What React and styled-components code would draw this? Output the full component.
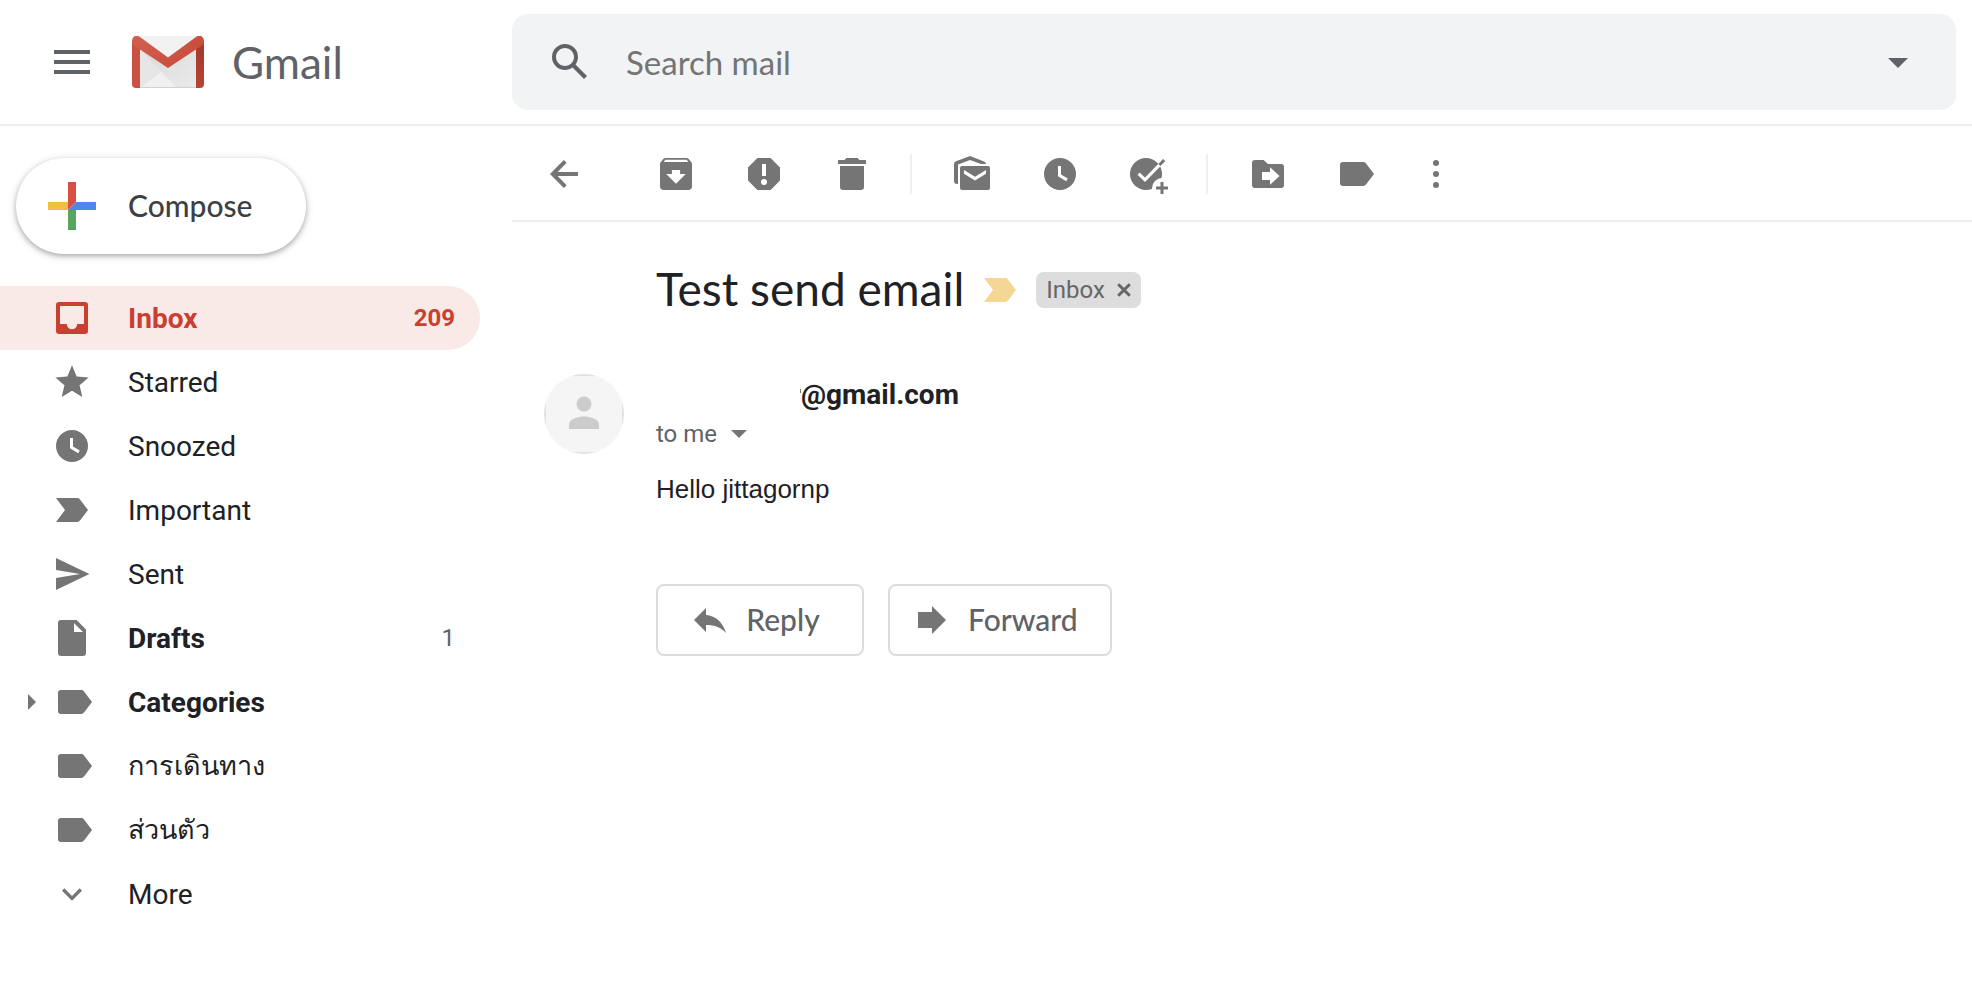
import React from "react";
import styled, { createGlobalStyle } from "styled-components";

const GlobalStyle = createGlobalStyle`
  *, *::before, *::after { box-sizing: border-box; }
  body { margin: 0; background: #fff; color: #202124; font-family: Roboto, "Liberation Sans", sans-serif; }
  button { margin: 0; padding: 0; border: 0; background: none; font: inherit; color: inherit; cursor: pointer; }
  svg { display: block; flex: none; }
`;

const brandFont = `Lato, "Open Sans", sans-serif`;

/* ---------- page frame ---------- */

const Header = styled.header`
  display: grid;
  grid-template-columns: 512px 1fr;
  align-items: center;
  height: 126px;
  padding-right: 16px;
  border-bottom: 2px solid #eee;
`;

const Brand = styled.div`
  display: flex;
  align-items: center;
  padding-left: 48px;
`;

const LogoLink = styled.a`
  display: flex;
  align-items: center;
  gap: 28px;
  margin-left: 36px;
  color: #5f6368;
  font: 400 44px/56px ${brandFont};
  text-decoration: none;
`;

const SearchBar = styled.form`
  display: flex;
  align-items: center;
  height: 96px;
  padding: 0 34px;
  border-radius: 16px;
  background: #f1f3f4;
  color: #5f6368;
`;

const SearchInput = styled.input`
  flex: 1;
  min-width: 0;
  height: 64px;
  padding: 0 32px;
  border: 0;
  outline: 0;
  background: transparent;
  color: #202124;
  font: 400 33px/40px ${brandFont};
  &::placeholder { color: #747474; opacity: 1; }
`;

const Body = styled.div`
  display: grid;
  grid-template-columns: 480px 1fr;
  column-gap: 32px;
`;

/* ---------- sidebar ---------- */

const ComposeButton = styled.button`
  display: flex;
  align-items: center;
  gap: 32px;
  height: 96px;
  margin: 32px 16px;
  padding: 0 54px 0 32px;
  border-radius: 48px;
  background: #fff;
  color: #3c4043;
  font: 500 30px/40px ${brandFont};
  box-shadow: 0 2px 4px rgba(60, 64, 67, 0.3), 0 2px 6px 2px rgba(60, 64, 67, 0.15);
`;

const ButtonLabel = styled.span`
  padding-bottom: 2px;
`;

const Folder = styled.a`
  display: grid;
  grid-template-columns: 24px 40px 1fr auto;
  align-items: center;
  height: 64px;
  padding: 0 25px 0 28px;
  border-radius: 0 32px 32px 0;
  background: ${(p) => (p.$active ? "#f9e9e7" : "transparent")};
  color: ${(p) => (p.$active ? "#c94031" : "#202124")};
  font-size: 28px;
  line-height: 40px;
  font-weight: ${(p) => (p.$bold ? 700 : 400)};
  text-decoration: none;
  svg { color: ${(p) => (p.$active ? "#c94031" : "#757575")}; }
`;

const FolderName = styled.span`
  padding: 2px 0 0 36px;
  &:lang(th) { padding-top: 0; font-size: 27px; }
`;

const FolderCount = styled.span`
  color: ${(p) => (p.$active ? "#c94031" : "#5f6368")};
  font-size: 24px;
  font-weight: ${(p) => (p.$active ? 700 : 400)};
`;

/* ---------- message view ---------- */

const Toolbar = styled.div`
  display: flex;
  align-items: center;
  gap: 48px;
  height: 96px;
  padding: 2px 0 0 32px;
  border-bottom: 2px solid #eee;
  color: #757575;
`;

const ToolGroup = styled.div`
  display: flex;
  align-items: center;
  gap: 48px;
  margin-left: ${(p) => p.$indent || 0}px;
`;

const Divider = styled.span`
  width: 2px;
  height: 40px;
  margin: 0 -8px 0 -10px;
  background: #eee;
`;

const SubjectRow = styled.div`
  display: flex;
  align-items: center;
  gap: 20px;
  padding: 40px 0 0 144px;
`;

const Subject = styled.h1`
  margin: 0;
  padding-bottom: 2px;
  font: 400 46px/54px ${brandFont};
`;

const Chip = styled.span`
  display: flex;
  align-items: center;
  gap: 12px;
  height: 36px;
  padding: 0 10px;
  border-radius: 8px;
  background: #ddd;
  color: #666;
  font-size: 24px;
  line-height: 36px;
`;

const Message = styled.article`
  display: grid;
  grid-template-columns: 80px 1fr;
  column-gap: 32px;
  padding: 56px 32px 0;
`;

const Avatar = styled.div`
  width: 80px;
  height: 80px;
  border-radius: 50%;
  overflow: hidden;
  background: #f5f5f5;
  color: #ccc;
`;

const AvatarFrame = styled.div`
  height: 100%;
  border: 2px solid #e2e2e2;
`;

const Sender = styled.div`
  display: flex;
  align-items: center;
  padding-top: 2px;
  font-size: 28px;
  font-weight: 700;
  line-height: 38px;
`;

const HiddenName = styled.span`
  width: 145px;
  height: 4px;
  margin-bottom: 8px;
  border-right: 1px solid #777;
`;

const Recipient = styled.button`
  display: flex;
  align-items: center;
  gap: 14px;
  color: #5f6368;
  font-size: 24px;
  line-height: 40px;
`;

const Text = styled.p`
  margin: 15px 0 75px;
  font: 400 26px/40px "Liberation Sans", Arial, sans-serif;
`;

const Actions = styled.div`
  display: flex;
  gap: 24px;
`;

const ActionButton = styled.button`
  display: flex;
  align-items: center;
  justify-content: center;
  gap: 16px;
  min-width: 208px;
  height: 72px;
  padding: 0 32px 0 22px;
  border: 2px solid #dadce0;
  border-radius: 8px;
  color: #5f6368;
  font: 500 30px/40px ${brandFont};
  svg { color: #757575; }
`;

/* ---------- icons ---------- */

const Icon = ({ size = 40, box = "0 0 20 20", children }) => (
  <svg width={size} height={size} viewBox={box} fill="currentColor" aria-hidden="true">
    {children}
  </svg>
);

const ClockIcon = () => (
  <Icon>
    <path fillRule="evenodd" d="M10 2a8 8 0 1 0 0 16 8 8 0 0 0 0-16zM9 6h1.5v4.3l3.4 2-.8 1.3L9 11.1z" />
  </Icon>
);

const TagIcon = ({ box }) => (
  <Icon box={box}>
    <path d="M3.5 4h10.2q.8 0 1.3.7L19 10l-4 5.3q-.5.7-1.3.7H3.5A1.5 1.5 0 0 1 2 14.500V5.500A1.500 1.500 0 0 1 3.500 4z" />
  </Icon>
);

const ImportantIcon = () => (
  <Icon>
    <path d="M2 4h10.700q.8 0 1.300.7L18 10l-4 5.300q-.5.7-1.300.7H2l4.500-6z" />
  </Icon>
);

const GmailLogo = () => (
  <svg width="72" height="52" viewBox="0 0 72 52" aria-hidden="true">
    <defs>
      <linearGradient id="flap" x1="0" y1="0" x2="1" y2="0.4">
        <stop offset="0" stopColor="#d2604f" />
        <stop offset="1" stopColor="#c94c3d" />
      </linearGradient>
      <linearGradient id="rightBar" x1="0" y1="0" x2="0" y2="1">
        <stop offset="0.2" stopColor="#a63a2c" />
        <stop offset="1" stopColor="#b84435" />
      </linearGradient>
      <linearGradient id="paper" x1="0" y1="0" x2="1" y2="1">
        <stop offset="0" stopColor="#d8d8d8" />
        <stop offset="1" stopColor="#ebebeb" />
      </linearGradient>
    </defs>
    <path d="M4 0h64v52H4z" fill="#e6e6e6" />
    <path d="M8 13l37 39h19V14L36 32z" fill="url(#paper)" />
    <path d="M8 52l21-16 16 16z" fill="#f0f0f0" />
    <path d="M5 0h62L36 22z" fill="#f2f2f2" />
    <path d="M8 51h56v1H8z" fill="#d2d2d2" />
    <path d="M0 5h8v47H4a4 4 0 0 1-4-4z" fill="#cb5243" />
    <path d="M64 5h8v43a4 4 0 0 1-4 4h-4z" fill="url(#rightBar)" />
    <path d="M0 5C0 0 5-1.500 8 1l28 20.500L64 1c3-2.500 8-1 8 4 0 2-1 3.500-2 4.500L36 32 2 9.500C1 8.500 0 7 0 5z" fill="url(#flap)" />
  </svg>
);

const icons = {
  inbox: (
    <Icon>
      <path fillRule="evenodd" d="M3.500 2h13A1.500 1.500 0 0 1 18 3.500v13a1.500 1.500 0 0 1-1.500 1.500h-13A1.500 1.500 0 0 1 2 16.500v-13A1.500 1.500 0 0 1 3.500 2zM4 4v9h3.400a2.600 2.600 0 0 0 5.200 0H16V4z" />
    </Icon>
  ),
  starred: (
    <Icon box="0 0 24 24">
      <path d="M12 17.270L18.180 21l-1.640-7.030L22 9.240l-7.190-.61L12 2 9.190 8.630 2 9.240l5.460 4.730L5.820 21z" />
    </Icon>
  ),
  snoozed: <ClockIcon />,
  important: <ImportantIcon />,
  sent: (
    <Icon>
      <path d="M2 2l16.700 8L2 18v-6l12-2L2 8z" />
    </Icon>
  ),
  drafts: (
    <Icon>
      <path fillRule="evenodd" d="M4.500 1h7.800L17 5.800v11.700a1.500 1.500 0 0 1-1.500 1.500h-11A1.500 1.500 0 0 1 3 17.500v-15A1.500 1.500 0 0 1 4.500 1zM11 2.500V7h4.500z" />
    </Icon>
  ),
  tag: <TagIcon box="-1 0 20 20" />,
  more: (
    <Icon box="0 0 24 24">
      <path d="M16.590 8.590L12 13.170 7.410 8.590 6 10l6 6 6-6z" />
    </Icon>
  ),
};

const folders = [
  { name: "Inbox", icon: "inbox", count: "209", active: true, bold: true },
  { name: "Starred", icon: "starred" },
  { name: "Snoozed", icon: "snoozed" },
  { name: "Important", icon: "important" },
  { name: "Sent", icon: "sent" },
  { name: "Drafts", icon: "drafts", count: "1", bold: true },
  { name: "Categories", icon: "tag", bold: true, expandable: true },
  { name: "การเดินทาง", icon: "tag", lang: "th" },
  { name: "ส่วนตัว", icon: "tag", lang: "th" },
  { name: "More", icon: "more" },
];

const messageTools = [
  [
    "Archive",
    <Icon box="0.75 0.75 22.5 22.5">
      <path d="M20.540 5.230l-1.390-1.680C18.880 3.210 18.470 3 18 3H6c-.47 0-.88.21-1.160.55L3.460 5.230C3.170 5.570 3 6.020 3 6.500V19c0 1.100.9 2 2 2h14c1.100 0 2-.9 2-2V6.500c0-.48-.17-.93-.46-1.270zM12 17.500L6.500 12H9.700V9.800h4.600V12h3.200L12 17.500zM5.120 5.200L6 4h12l.94 1.200H5.120z" />
    </Icon>,
  ],
  [
    "Report spam",
    <Icon>
      <path fillRule="evenodd" d="M6.700 2h6.600L18 6.700v6.600L13.300 18H6.700L2 13.300V6.700zM9 5v6h2V5zM10 12.500a1.500 1.500 0 1 0 0 3 1.500 1.500 0 0 0 0-3z" />
    </Icon>,
  ],
  [
    "Delete",
    <Icon>
      <path d="M3 3h3.300l.9-1h5.600l.9 1H17v2H3zM4 6h12v10.500a1.500 1.500 0 0 1-1.500 1.500h-9A1.500 1.500 0 0 1 4 16.500z" />
    </Icon>,
  ],
];

const stateTools = [
  [
    "Mark as unread",
    <Icon>
      <path d="M1 5q0-1 1-1.400L9 1l7 2.700q1 .3 1 1.300h-2.500L9 3 3 5.200V15h-.5Q1 15 1 13.500z" />
      <path fillRule="evenodd" d="M5 6h13a1 1 0 0 1 1 1v10a1 1 0 0 1-1 1H5a1 1 0 0 1-1-1V7a1 1 0 0 1 1-1zM6 8v1.900l5.500 3.400L17 9.900V8l-5.500 3.400z" />
    </Icon>,
  ],
  ["Snooze", <ClockIcon />],
  [
    "Add to tasks",
    <Icon>
      <circle cx="9" cy="10" r="8" />
      <circle cx="17" cy="17" r="5" fill="#fff" />
      <path d="M5.300 9.800l3.200 3.100 8-8.200" fill="none" stroke="#fff" strokeWidth="1.600" />
      <path d="M15.700 5.500l2.400-2.500" fill="none" stroke="currentColor" strokeWidth="1.500" />
      <path d="M16.250 14h1.500v2.250H20v1.500h-2.250V20h-1.500v-2.250H14v-1.500h2.250z" />
    </Icon>,
  ],
];

const filingTools = [
  [
    "Move to",
    <Icon>
      <path fillRule="evenodd" d="M3.500 3h4.300L10 5h6.500A1.500 1.500 0 0 1 18 6.500v9a1.500 1.500 0 0 1-1.500 1.500h-13A1.500 1.500 0 0 1 2 15.500v-11A1.500 1.500 0 0 1 3.500 3zM7 9v4h4v2.400l4.800-4.400L11 6.600V9z" />
    </Icon>,
  ],
  ["Labels", <TagIcon />],
];

const Tools = ({ items, indent }) => (
  <ToolGroup $indent={indent}>
    {items.map(([label, icon]) => (
      <button key={label} type="button" aria-label={label}>
        {icon}
      </button>
    ))}
  </ToolGroup>
);

/* ---------- app ---------- */

export default function App() {
  return (
    <>
      <GlobalStyle />
      <Header>
        <Brand>
          <button type="button" aria-label="Main menu">
            <svg width="48" height="48" viewBox="0 0 24 24" fill="#5f6368" aria-hidden="true">
              <path d="M3 18h18v-2H3v2zm0-5h18v-2H3v2zm0-7v2h18V6H3z" />
            </svg>
          </button>
          <LogoLink href="#inbox">
            <GmailLogo />
            Gmail
          </LogoLink>
        </Brand>
        <SearchBar role="search" onSubmit={(e) => e.preventDefault()}>
          <button type="submit" aria-label="Search">
            <Icon size={48} box="0 0 24 24">
              <path d="M20.490 19l-5.730-5.730C15.530 12.200 16 10.910 16 9.500A6.500 6.500 0 1 0 9.500 16c1.410 0 2.700-.47 3.770-1.240L19 20.490 20.490 19zM5 9.500C5 7.010 7.010 5 9.500 5S14 7.010 14 9.500 11.990 14 9.500 14 5 11.990 5 9.500z" />
            </Icon>
          </button>
          <SearchInput type="text" aria-label="Search mail" placeholder="Search mail" />
          <button type="button" aria-label="Show search options">
            <Icon size={48} box="0 0 24 24">
              <path d="M7 10l5 5 5-5z" />
            </Icon>
          </button>
        </SearchBar>
      </Header>

      <Body>
        <aside>
          <ComposeButton type="button">
            <svg width="48" height="48" viewBox="0 0 48 48" aria-hidden="true">
              <path d="M0 20h20v8H0z" fill="#f2be42" />
              <path d="M20 28h8v20h-8z" fill="#58a55c" />
              <path d="M28 20h20v8H20z" fill="#5086ec" />
              <path d="M20 0h8v20l-8 8z" fill="#d95040" />
            </svg>
            <ButtonLabel>Compose</ButtonLabel>
          </ComposeButton>
          <nav aria-label="Folders">
            {folders.map((f) => (
              <Folder key={f.name} href="#folder" $active={f.active} $bold={f.bold}>
                <span>
                  {f.expandable && (
                    <svg width="8" height="16" viewBox="0 0 8 16" fill="currentColor" aria-hidden="true">
                      <path d="M0 0l8 8-8 8z" />
                    </svg>
                  )}
                </span>
                {icons[f.icon]}
                <FolderName lang={f.lang}>{f.name}</FolderName>
                {f.count && <FolderCount $active={f.active}>{f.count}</FolderCount>}
              </Folder>
            ))}
          </nav>
        </aside>

        <main>
          <Toolbar>
            <button type="button" aria-label="Back to Inbox">
              <Icon>
                <path d="M17 10H4.500M10.600 3.700L4.400 10l6.200 6.300" fill="none" stroke="currentColor" strokeWidth="2" />
              </Icon>
            </button>
            <Tools items={messageTools} indent={24} />
            <Divider />
            <Tools items={stateTools} />
            <Divider />
            <Tools items={filingTools} />
            <button type="button" aria-label="More">
              <svg width="24" height="40" viewBox="0 0 12 20" fill="currentColor" aria-hidden="true">
                <circle cx="6" cy="4.500" r="1.500" />
                <circle cx="6" cy="10" r="1.500" />
                <circle cx="6" cy="15.500" r="1.500" />
              </svg>
            </button>
          </Toolbar>

          <SubjectRow>
            <Subject>Test send email</Subject>
            <svg width="32" height="24" viewBox="2 4 16 12" fill="#f5d694" aria-hidden="true">
              <path d="M2 4h10.700q.8 0 1.300.7L18 10l-4 5.300q-.5.7-1.300.7H2l4.500-6z" />
            </svg>
            <Chip>
              Inbox
              <button type="button" aria-label="Remove label Inbox">
                <svg width="14" height="14" viewBox="0 0 14 14" aria-hidden="true">
                  <path d="M1.200 1.200l11.600 11.600M12.800 1.200L1.200 12.800" stroke="#666" strokeWidth="3" />
                </svg>
              </button>
            </Chip>
          </SubjectRow>

          <Message>
            <Avatar>
              <AvatarFrame>
                <svg width="76" height="76" viewBox="2 2 76 76" fill="currentColor" aria-hidden="true">
                  <circle cx="40" cy="30" r="7.500" />
                  <path d="M25 55v-5c0-5 9-7.500 15-7.500S55 45 55 50v5z" />
                </svg>
              </AvatarFrame>
            </Avatar>
            <div>
              <Sender>
                <HiddenName />
                @gmail.com
              </Sender>
              <Recipient type="button">
                to me
                <svg width="16" height="8" viewBox="0 0 16 8" fill="#757575" aria-hidden="true">
                  <path d="M0 0h16L8 8z" />
                </svg>
              </Recipient>
              <Text>Hello jittagornp</Text>
              <Actions>
                <ActionButton type="button">
                  <Icon>
                    <path d="M2 10l6-6v3.500c5 .5 8.300 3.500 10 9-2.500-2.800-5.500-4-10-4V16z" />
                  </Icon>
                  <ButtonLabel>Reply</ButtonLabel>
                </ActionButton>
                <ActionButton type="button">
                  <Icon>
                    <path d="M3 6h7V3l7 7-7 7v-3H3z" />
                  </Icon>
                  <ButtonLabel>Forward</ButtonLabel>
                </ActionButton>
              </Actions>
            </div>
          </Message>
        </main>
      </Body>
    </>
  );
}
